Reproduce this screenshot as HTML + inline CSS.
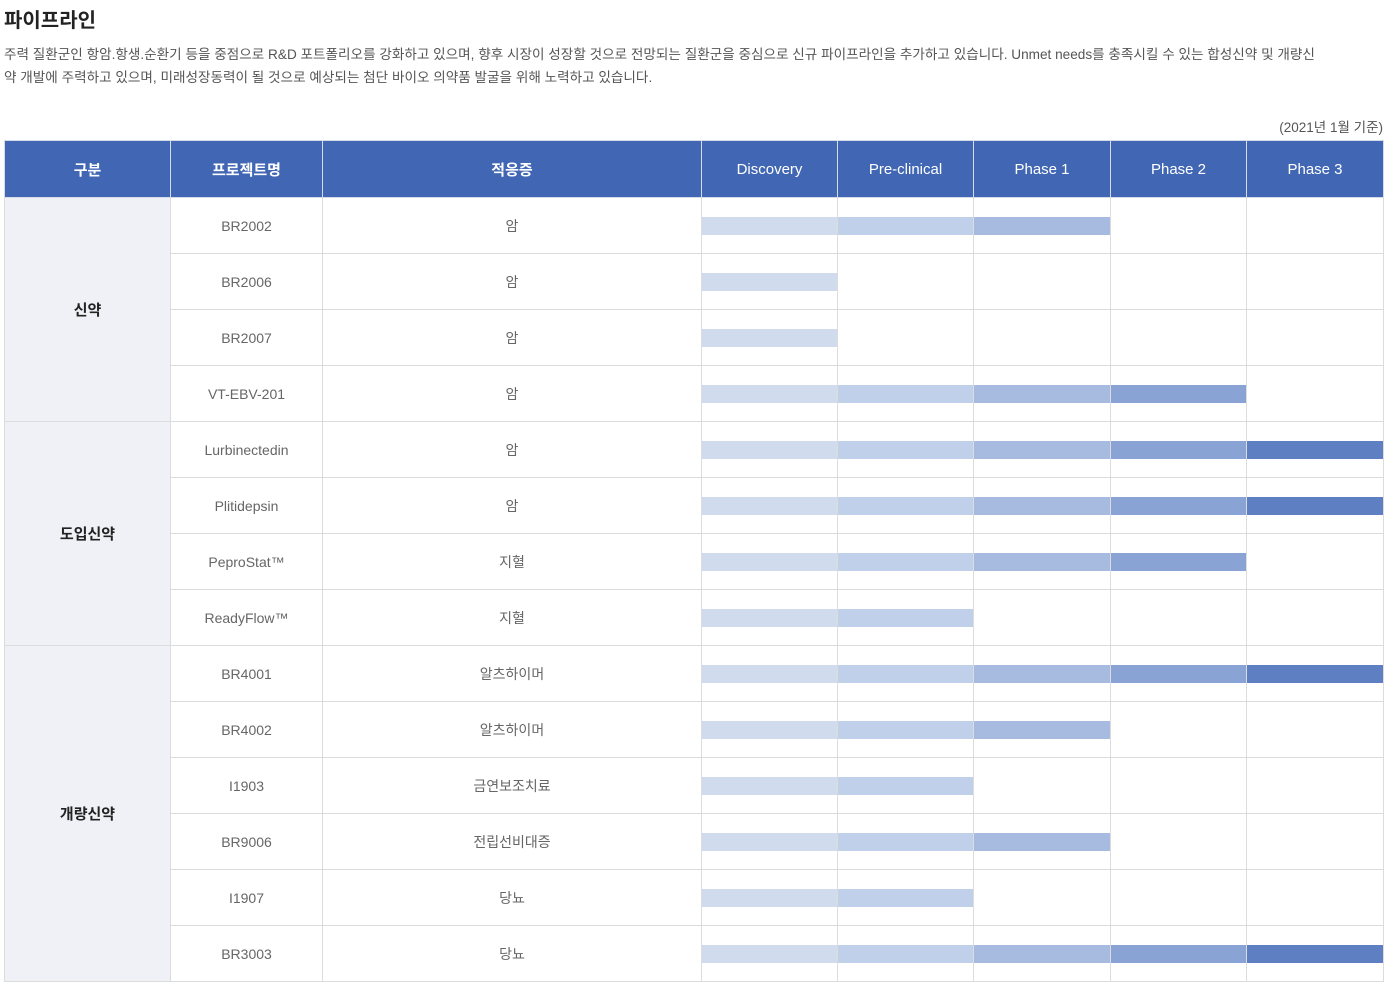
<!DOCTYPE html>
<html><head><meta charset="utf-8"><style>
body{margin:0;background:#fff;font-family:"Liberation Sans","Noto Sans CJK KR",sans-serif;color:#555;}
h1{position:absolute;left:4px;top:4px;margin:0;font-size:20px;font-weight:bold;color:#222;}
p.d{position:absolute;left:4px;top:43px;margin:0;font-size:13.6px;line-height:23px;width:1385px;color:#555;}
.date{position:absolute;right:6px;top:116px;font-size:13.5px;color:#555;}
table{position:absolute;left:4px;top:140px;border-collapse:collapse;table-layout:fixed;width:1380px;}
td,th{border:1px solid #dcdcdc;padding:0;text-align:center;font-size:14px;color:#666;height:55px;}
th{background:#4066b4;color:#fff;font-weight:bold;font-size:15px;height:56px;border-color:#d5dbe8;}
th.e{font-weight:normal;font-family:"Liberation Sans Narrow","Liberation Sans",sans-serif;}
td.g{background:#f0f1f6;color:#222;font-weight:bold;font-size:15px;}
td.p{vertical-align:middle;}
.b{height:18px;width:100%;}
.c1{background:#d0dbee}.c2{background:#c0d0ea}.c3{background:#a7bae0}.c4{background:#88a3d4}.c5{background:#5e7fc2}
</style></head><body>
<h1>파이프라인</h1>
<p class="d">주력 질환군인 항암.항생.순환기 등을 중점으로 R&amp;D 포트폴리오를 강화하고 있으며, 향후 시장이 성장할 것으로 전망되는 질환군을 중심으로 신규 파이프라인을 추가하고 있습니다. Unmet needs를 충족시킬 수 있는 합성신약 및 개량신<br>약 개발에 주력하고 있으며, 미래성장동력이 될 것으로 예상되는 첨단 바이오 의약품 발굴을 위해 노력하고 있습니다.</p>
<div class="date">(2021년 1월 기준)</div>
<table>
<colgroup><col style="width:166px"><col style="width:152px"><col style="width:379px"><col style="width:136px"><col style="width:136px"><col style="width:137px"><col style="width:136px"><col style="width:137px"></colgroup>
<tr><th>구분</th><th>프로젝트명</th><th>적응증</th><th class="e">Discovery</th><th class="e">Pre-clinical</th><th class="e">Phase 1</th><th class="e">Phase 2</th><th class="e">Phase 3</th></tr>
<tr><td class="g" rowspan="4">신약</td><td>BR2002</td><td>암</td><td><div class="b c1"></div></td><td><div class="b c2"></div></td><td><div class="b c3"></div></td><td></td><td></td></tr>
<tr><td>BR2006</td><td>암</td><td><div class="b c1"></div></td><td></td><td></td><td></td><td></td></tr>
<tr><td>BR2007</td><td>암</td><td><div class="b c1"></div></td><td></td><td></td><td></td><td></td></tr>
<tr><td>VT-EBV-201</td><td>암</td><td><div class="b c1"></div></td><td><div class="b c2"></div></td><td><div class="b c3"></div></td><td><div class="b c4"></div></td><td></td></tr>
<tr><td class="g" rowspan="4">도입신약</td><td>Lurbinectedin</td><td>암</td><td><div class="b c1"></div></td><td><div class="b c2"></div></td><td><div class="b c3"></div></td><td><div class="b c4"></div></td><td><div class="b c5"></div></td></tr>
<tr><td>Plitidepsin</td><td>암</td><td><div class="b c1"></div></td><td><div class="b c2"></div></td><td><div class="b c3"></div></td><td><div class="b c4"></div></td><td><div class="b c5"></div></td></tr>
<tr><td>PeproStat™</td><td>지혈</td><td><div class="b c1"></div></td><td><div class="b c2"></div></td><td><div class="b c3"></div></td><td><div class="b c4"></div></td><td></td></tr>
<tr><td>ReadyFlow™</td><td>지혈</td><td><div class="b c1"></div></td><td><div class="b c2"></div></td><td></td><td></td><td></td></tr>
<tr><td class="g" rowspan="6">개량신약</td><td>BR4001</td><td>알츠하이머</td><td><div class="b c1"></div></td><td><div class="b c2"></div></td><td><div class="b c3"></div></td><td><div class="b c4"></div></td><td><div class="b c5"></div></td></tr>
<tr><td>BR4002</td><td>알츠하이머</td><td><div class="b c1"></div></td><td><div class="b c2"></div></td><td><div class="b c3"></div></td><td></td><td></td></tr>
<tr><td>I1903</td><td>금연보조치료</td><td><div class="b c1"></div></td><td><div class="b c2"></div></td><td></td><td></td><td></td></tr>
<tr><td>BR9006</td><td>전립선비대증</td><td><div class="b c1"></div></td><td><div class="b c2"></div></td><td><div class="b c3"></div></td><td></td><td></td></tr>
<tr><td>I1907</td><td>당뇨</td><td><div class="b c1"></div></td><td><div class="b c2"></div></td><td></td><td></td><td></td></tr>
<tr><td>BR3003</td><td>당뇨</td><td><div class="b c1"></div></td><td><div class="b c2"></div></td><td><div class="b c3"></div></td><td><div class="b c4"></div></td><td><div class="b c5"></div></td></tr>
</table>
</body></html>
